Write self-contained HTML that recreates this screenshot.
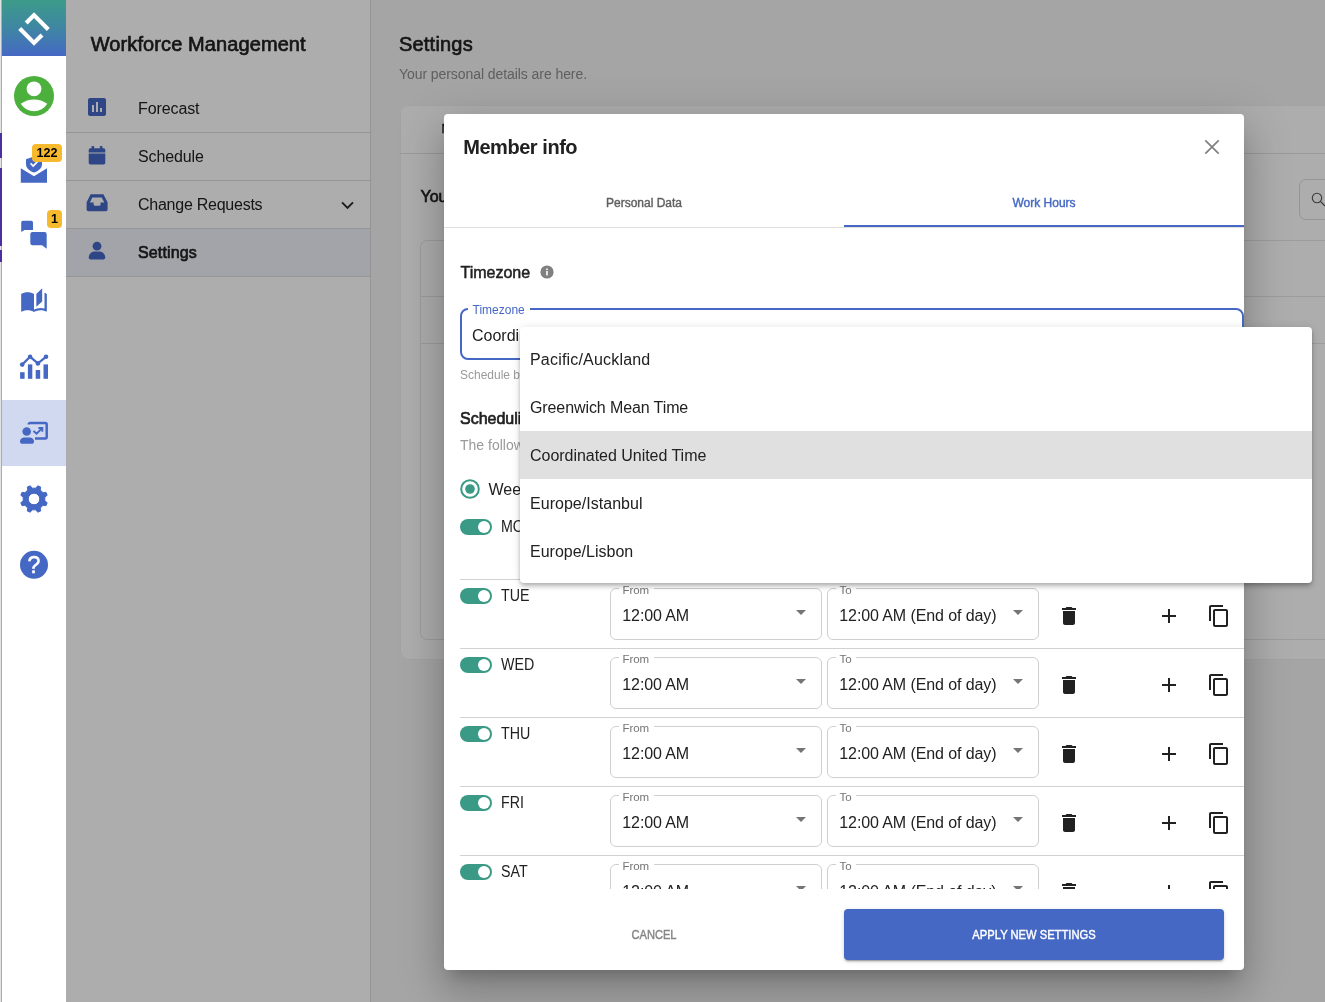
<!DOCTYPE html>
<html lang="en">
<head>
<meta charset="utf-8">
<title>Workforce Management - Settings</title>
<style>
*{box-sizing:border-box;margin:0;padding:0}
html,body{width:1325px;height:1002px;overflow:hidden;background:#fff}
body{font-family:"Liberation Sans",Arial,sans-serif;color:#212121;position:relative;font-size:16px}
.abs{position:absolute}
.t{position:absolute;white-space:nowrap;line-height:1}
.med{-webkit-text-stroke:0.4px currentColor}
.med2{-webkit-text-stroke:0.65px currentColor}
svg{display:block;position:absolute;overflow:visible}

/* left sliver of host page */
#strip{position:absolute;left:0;top:0;width:2px;height:1002px;background:linear-gradient(90deg,#e2e2e2 0,#e2e2e2 1px,#adadad 1px)}
#strip i{position:absolute;left:0;width:2px;background:#4b2f9e}

/* icon rail */
#rail{position:absolute;left:2px;top:0;width:64px;height:1002px;background:#fff}
#logo{position:absolute;left:0;top:0;width:64px;height:56px;background:linear-gradient(180deg,#3c9b89 0%,#3f86a3 50%,#4568c4 100%)}
#rail .sel{position:absolute;left:0;top:400px;width:64px;height:66px;background:#d1d9f1}
.badge{position:absolute;height:18px;border-radius:4px;background:#f7b92e;color:#000;font-weight:700;font-size:12.600px;line-height:19px;text-align:center}

/* app (micro-frontend) area */
#app{position:absolute;left:66px;top:0;width:1259px;height:1002px;overflow:hidden;background:#f3f3f3}
#nav{position:absolute;left:0;top:0;width:305px;height:1002px;background:#fff;border-right:1px solid #dcdcdc}
.nitem{position:absolute;left:0;width:304px;height:48px;border-bottom:1px solid #dedede}
#scrim{position:absolute;left:0;top:0;width:1259px;height:1002px;background:rgba(0,0,0,.32)}

/* background card */
#card{position:absolute;left:334px;top:105px;width:1000px;height:555px;background:#fff;border-radius:9px;box-shadow:inset 0 0 0 1px #f0f0f0}

/* dialog */
#dlg{position:absolute;left:378px;top:114px;width:800px;height:856px;background:#fff;border-radius:4px;
 box-shadow:0 11px 15px -7px rgba(0,0,0,.2),0 24px 38px 3px rgba(0,0,0,.14),0 9px 46px 8px rgba(0,0,0,.12)}
#scroll{position:absolute;left:0;top:114px;width:800px;height:661px;overflow:hidden}
.row{position:absolute;left:16px;width:784px;height:69px}
.row:before{content:"";position:absolute;left:0;top:0;width:784px;height:1px;background:#d2d2d2}
.row.first:before{display:none}
.tog{position:absolute;left:0;top:9px;width:32px;height:16px;border-radius:8px;background:#3b9a85}
.tog:after{content:"";position:absolute;right:2px;top:2px;width:12px;height:12px;border-radius:50%;background:#fff}
.day{position:absolute;left:40.500px;top:8.500px;font-size:16px;line-height:16px;white-space:nowrap;transform:scaleX(.89);transform-origin:0 0}
.fld{position:absolute;top:9px;height:52px;width:212px;border:1px solid #cfcfcf;border-radius:6px}
.fld .lb{position:absolute;top:-6px;left:8px;padding:0 5px 0 3.500px;background:#fff;font-size:11.500px;line-height:14px;color:#757575;white-space:nowrap;letter-spacing:-.1px}
.fld .v{position:absolute;left:11.300px;top:18px;font-size:16px;line-height:18px;white-space:nowrap;color:#212121;letter-spacing:-.1px}
.fld .ar{position:absolute;right:15px;top:21px;width:0;height:0;border-left:5px solid transparent;border-right:5px solid transparent;border-top:5px solid #757575}
.ic{position:absolute;top:25px;width:24px;height:24px}

/* dropdown */
#menu{position:absolute;left:454px;top:327px;width:792px;height:256px;background:#fff;border-radius:4px;
 box-shadow:0 2px 4px -1px rgba(0,0,0,.2),0 4px 5px 0 rgba(0,0,0,.14),0 1px 10px 0 rgba(0,0,0,.12)}
.mi{position:absolute;left:0;width:792px;height:48px;padding-left:10px;font-size:16px;line-height:48px;white-space:nowrap;color:#212121}
#rail,#nav,#main,#dlg,#menu,#scroll{will-change:transform}
.mi span{display:inline-block;transform:translateY(.5px)}
</style>
</head>
<body>

<div id="strip">
 <i style="top:133px;height:25px"></i><i style="top:168px;height:78px"></i><i style="top:250px;height:12px"></i>
</div>

<div id="rail">
 <div id="logo"></div>
 <div class="sel"></div>
 
 <svg style="left:-2px;top:0" width="68" height="600" viewBox="0 0 68 600">
  <!-- logo -->
  <g fill="none" stroke="#fff" stroke-width="4.200" stroke-linejoin="miter">
   <polyline points="26.200,22.900 34,15.100 48.300,29.400"/>
   <polyline points="19.700,28.600 34,42.900 42,34.900"/>
  </g>
  <!-- avatar (account_circle 48px) -->
  <circle cx="34" cy="96" r="20" fill="#4cb03c"/>
  <circle cx="34" cy="88.800" r="7.400" fill="#fff"/>
  <path d="M20.750,103.800 A22.400,22.400 0 0 1 47.250,103.800 A15.600,15.600 0 0 1 20.750,103.800Z" fill="#fff"/>
  <!-- inbox / shield -->
  <g fill="#4568c4">
   <path d="M20.8,168.2 L34,176.2 L47,168.2 V182.8 H20.8Z"/>
   <path d="M26,159.2 L34,156.5 L42,159.2 V164 C42,168.2 38.4,171 34,172.6 C29.600,171 26,168.2 26,164Z"/>
  </g>
  <polyline points="30.6,163.4 33.2,166 38.2,160.8" fill="none" stroke="#fff" stroke-width="1.7"/>
  <!-- chat -->
  <g fill="#4568c4">
   <path d="M23,220.800 H31.200 A1.800,1.800 0 0 1 33,222.600 V230 H24.500 L21.200,232 V222.600 A1.800,1.800 0 0 1 23,220.800Z"/>
   <path d="M32.500,232 H44.500 A2.200,2.200 0 0 1 46.700,234.200 V248.700 L42,245.200 H32.500 A2.200,2.200 0 0 1 30.300,243 V234.200 A2.200,2.200 0 0 1 32.500,232Z"/>
  </g>
  <!-- book (auto_stories 28px) -->
  <g transform="translate(20,287) scale(1.1667)" fill="#4568c4"><path d="M19 1l-5 5v11l5-4.500V1zM1 6v14.650c0 .250.250.500.500.500.100 0 .150-.050.250-.050C3.100 20.450 5.050 20 6.500 20c1.950 0 4.050.400 5.500 1.500V6c-1.450-1.100-3.550-1.500-5.500-1.500S2.450 4.900 1 6zm22 13.500V6c-.600-.450-1.250-.750-2-1v13.500c-1.100-.350-2.300-.500-3.500-.500-1.700 0-4.150.650-5.500 1.500v2c1.350-.850 3.800-1.500 5.500-1.500 1.650 0 3.350.300 4.750 1.050.100.050.150.050.250.050.250 0 .500-.250.500-.500v-1.100z"/></g>
  <!-- analytics -->
  <g fill="#4568c4">
   <rect x="20.100" y="372.200" width="4.500" height="6.600"/>
   <rect x="27.900" y="364.400" width="4.400" height="14.400"/>
   <rect x="35.700" y="370" width="4.500" height="8.800"/>
   <rect x="43.500" y="364.400" width="4.500" height="14.400"/>
   <circle cx="22.200" cy="364.600" r="2.300"/><circle cx="30.100" cy="356.800" r="2.300"/><circle cx="37.900" cy="363.400" r="2.300"/><circle cx="46" cy="356.800" r="2.300"/>
  </g>
  <polyline points="22.200,364.600 30.100,356.800 37.900,363.400 46,356.800" fill="none" stroke="#4568c4" stroke-width="2.200"/>
  <!-- wfm -->
  <g fill="#4568c4">
   <circle cx="26.700" cy="431.500" r="4.300"/>
   <path d="M20,441.400 C20,438.800 22.400,437.400 24.800,437.400 H29.200 C31.600,437.400 34,438.800 34,441.400 C34,442.900 33,443.800 31.800,443.800 H22.200 C21,443.800 20,442.900 20,441.400Z"/>
  </g>
  <g fill="none" stroke="#4568c4">
   <path d="M28.700,424.600 V424.400 A1.400,1.400 0 0 1 30.100,423 H45.300 A1.400,1.400 0 0 1 46.700,424.400 V437.100 A1.400,1.400 0 0 1 45.300,438.500 H35" stroke-width="2.500"/>
   <polyline points="33.400,431 36.600,433.600 41.600,428.600" stroke-width="1.900"/>
   <polyline points="38.400,428 42.300,428 42.300,431.800" stroke-width="1.900"/>
  </g>
  <!-- gear -->
  <g transform="translate(20,485)"><path fill="#4568c4" stroke="#4568c4" stroke-width="1" stroke-linejoin="round" fill-rule="evenodd" d="M15.98,3.18 L17.72,0.81 L20.69,2.05 L20.25,4.95 L23.05,7.75 L25.95,7.31 L27.19,10.28 L24.82,12.02 L24.82,15.98 L27.19,17.72 L25.95,20.69 L23.05,20.25 L20.25,23.05 L20.69,25.95 L17.72,27.19 L15.98,24.82 L12.02,24.82 L10.28,27.19 L7.31,25.95 L7.75,23.05 L4.95,20.25 L2.05,20.69 L0.81,17.72 L3.18,15.98 L3.18,12.02 L0.81,10.28 L2.05,7.31 L4.95,7.75 L7.75,4.95 L7.31,2.05 L10.28,0.81 L12.02,3.18Z M14,8.200 A5.800,5.800 0 1 0 14,19.800 A5.800,5.800 0 1 0 14,8.200Z"/></g>
  <!-- help -->
  <circle cx="34" cy="564.800" r="14" fill="#4568c4"/>
  <text x="34" y="573" text-anchor="middle" font-family="Liberation Sans, Arial, sans-serif" font-size="23" fill="#fff" stroke="#fff" stroke-width=".500">?</text>
 </svg>
 <div class="badge" style="left:30px;top:144px;width:30px">122</div>
 <div class="badge" style="left:45px;top:210px;width:15px">1</div>

</div>

<div id="app">
 <div id="nav">
  
  <div class="t med2" style="left:24.700px;top:34px;font-size:20px;letter-spacing:.1px" id="t1">Workforce Management</div>
  <div class="nitem" style="top:85px"></div>
  <div class="nitem" style="top:133px"></div>
  <div class="nitem" style="top:181px"></div>
  <div class="nitem" style="top:229px;background:#eff2fa"></div>
  <div class="t" style="left:72px;top:101px;letter-spacing:-.1px" id="t2">Forecast</div>
  <div class="t" style="left:72px;top:149px;letter-spacing:-.12px" id="t3">Schedule</div>
  <div class="t" style="left:72px;top:197px;letter-spacing:-.25px" id="t4">Change Requests</div>
  <div class="t med2" style="left:72px;top:245px;letter-spacing:.15px" id="t5">Settings</div>
  <svg style="left:0;top:0" width="304" height="300" viewBox="66 0 304 300">
   <g fill="#4568c4">
    <g transform="translate(85,95)"><path d="M19 3H5c-1.100 0-2 .900-2 2v14c0 1.100.900 2 2 2h14c1.100 0 2-.900 2-2V5c0-1.100-.900-2-2-2zM9 17H7v-7h2v7zm4 0h-2V7h2v10zm4 0h-2v-4h2v4z"/></g>
    <rect x="91.600" y="145.900" width="2.500" height="4" rx=".700"/><rect x="99.900" y="145.900" width="2.500" height="4" rx=".700"/>
    <path d="M88.700,150 a1.700,1.700 0 0 1 1.700,-1.700 h13.200 a1.700,1.700 0 0 1 1.700,1.700 v2.400 h-16.600z"/>
    <path d="M88.700,153.600 h16.600 v9.100 a1.700,1.700 0 0 1 -1.700,1.700 h-13.200 a1.700,1.700 0 0 1 -1.700,-1.700z"/>
    <path fill-rule="evenodd" d="M90.600,194.300 H103.400 L107.600,202.300 V209.400 a1.800,1.800 0 0 1 -1.800,1.800 H88.400 a1.800,1.800 0 0 1 -1.800,-1.800 V202.300Z M92.300,197.600 H101.700 L104.300,202.600 H100.600 V204.200 a1.600,1.600 0 0 1 -1.600,1.600 H95.200 a1.600,1.600 0 0 1 -1.600,-1.600 V202.600 H89.900Z"/>
    <circle cx="97" cy="246.200" r="4.400"/>
    <path d="M88.700,257.600 c0,-3.600 2.800,-6.200 6,-6.200 h4.600 c3.200,0 6,2.600 6,6.200 c0,1 -.800,1.800 -1.800,1.800 h-13 c-1,0 -1.800,-.800 -1.800,-1.800z"/>
   </g>
   <polyline points="342,202.300 347.500,207.800 353,202.300" fill="none" stroke="#2a2a2a" stroke-width="1.900"/>
  </svg>

 </div>
 <div id="main">
  
  <div class="t med2" style="left:333px;top:34px;font-size:20px;letter-spacing:.2px" id="t6">Settings</div>
  <div class="t" style="left:333px;top:67px;font-size:14px;color:#8d8d8d;letter-spacing:-.07px" id="t7">Your personal details are here.</div>
  <div id="card">
   <div class="abs" style="left:0;top:48px;width:1000px;height:1px;background:#e2e2e2"></div>
   <div class="t med" style="left:41.500px;top:17.500px;font-size:12px">Members</div>
   <div class="t med2" style="left:20.500px;top:84px;font-size:16px">Your team members</div>
   <div class="abs" style="left:20px;top:135px;width:1000px;height:400px;border:1px solid #e6e6e6;border-radius:7px"></div>
   <div class="abs" style="left:20px;top:191px;width:1000px;height:1px;background:#e6e6e6"></div>
   <div class="abs" style="left:20px;top:238px;width:1000px;height:1px;background:#e6e6e6"></div>
   <div class="abs" style="left:899px;top:74px;width:120px;height:41px;border:1px solid #dcdcdc;border-radius:7px"></div>
   <svg style="left:911px;top:87px" width="16" height="16" viewBox="0 0 16 16"><circle cx="6" cy="6" r="4.700" fill="none" stroke="#555" stroke-width="1.100"/><path d="M9.500,9.500 L14,14" stroke="#555" stroke-width="1.100"/></svg>
  </div>

 </div>
 <div id="scrim"></div>
 <div id="dlg">
  
  <div class="t" style="left:19.200px;top:23px;font-size:20px;font-weight:700;letter-spacing:-.45px" id="t8">Member info</div>
  <svg style="left:761px;top:26px" width="14" height="14" viewBox="0 0 14 14"><path d="M0.300,0.300 L13.700,13.700 M13.700,0.300 L0.300,13.700" stroke="#808080" stroke-width="1.700" fill="none"/></svg>
  <div class="t med" style="left:100px;width:200px;text-align:center;top:83px;font-size:12px;color:#5f5f5f" id="t9"><span>Personal Data</span></div>
  <div class="t med" style="left:500px;width:200px;text-align:center;top:83px;font-size:12px;color:#4568c4" id="t10"><span>Work Hours</span></div>
  <div class="abs" style="left:0;top:113px;width:800px;height:1px;background:#e0e0e0"></div>
  <div class="abs" style="left:400px;top:111px;width:400px;height:2px;background:#4568c4"></div>
  <div id="scroll">
   <div class="t med" style="left:16.500px;top:37px;font-size:16px;-webkit-text-stroke-width:.5px" id="t11">Timezone</div>
   <svg style="left:95.700px;top:37.100px" width="14" height="14" viewBox="0 0 14 14"><circle cx="7" cy="7" r="6.600" fill="#808080"/><rect x="6.200" y="6" width="1.600" height="4.400" fill="#fff"/><rect x="6.200" y="3.500" width="1.600" height="1.600" fill="#fff"/></svg>
   <div class="abs" style="left:16px;top:80px;width:784px;height:52px;border:2px solid #4568c4;border-radius:8px"></div>
   <div class="abs" style="left:23.500px;top:78px;width:62.500px;height:6px;background:#fff"></div>
   <div class="t" style="left:28.500px;top:76px;font-size:12px;color:#4568c4" id="t12">Timezone</div>
   <div class="t" style="left:28px;top:100.200px;font-size:16px">Coordinated United Time</div>
   <div class="t" style="left:16px;top:140.500px;font-size:12px;color:#9a9a9a">Schedule based on the selected timezone</div>
   <div class="t med2" style="left:16px;top:183px;font-size:16px">Scheduling availability</div>
   <div class="t" style="left:16px;top:210px;font-size:14px;color:#9a9a9a">The following hours are used for scheduling</div>
   <svg style="left:16px;top:251px" width="20" height="20" viewBox="0 0 20 20"><circle cx="10" cy="10" r="8.800" fill="none" stroke="#3b9a85" stroke-width="2"/><circle cx="10" cy="10" r="4.800" fill="#3b9a85"/></svg>
   <div class="t" style="left:44.500px;top:254.200px;font-size:16px">Weekly</div>
   
   <div class="row first" style="top:282px">
    <div class="tog"></div><div class="day">MON</div>
    <div class="fld" style="left:150px"><span class="lb">From</span><span class="v">12:00 AM</span><i class="ar"></i></div>
    <div class="fld" style="left:367px"><span class="lb">To</span><span class="v">12:00 AM (End of day)</span><i class="ar"></i></div>
    <svg class="ic" style="left:597px" viewBox="0 0 24 24"><path fill="#212121" d="M6 19c0 1.100.900 2 2 2h8c1.100 0 2-.900 2-2V7H6v12zM19 4h-3.500l-1-1h-5l-1 1H5v2h14V4z"/></svg>
    <svg class="ic" style="left:697px" viewBox="0 0 24 24"><path fill="#212121" d="M19 13h-6v6h-2v-6H5v-2h6V5h2v6h6v2z"/></svg>
    <svg class="ic" style="left:747px" viewBox="0 0 24 24"><path fill="#212121" d="M16 1H4c-1.100 0-2 .900-2 2v14h2V3h12V1zm3 4H8c-1.100 0-2 .900-2 2v14c0 1.100.900 2 2 2h11c1.100 0 2-.900 2-2V7c0-1.100-.900-2-2-2zm0 16H8V7h11v14z"/></svg>
   </div>
   <div class="row" style="top:351px">
    <div class="tog"></div><div class="day">TUE</div>
    <div class="fld" style="left:150px"><span class="lb">From</span><span class="v">12:00 AM</span><i class="ar"></i></div>
    <div class="fld" style="left:367px"><span class="lb">To</span><span class="v">12:00 AM (End of day)</span><i class="ar"></i></div>
    <svg class="ic" style="left:597px" viewBox="0 0 24 24"><path fill="#212121" d="M6 19c0 1.100.900 2 2 2h8c1.100 0 2-.900 2-2V7H6v12zM19 4h-3.500l-1-1h-5l-1 1H5v2h14V4z"/></svg>
    <svg class="ic" style="left:697px" viewBox="0 0 24 24"><path fill="#212121" d="M19 13h-6v6h-2v-6H5v-2h6V5h2v6h6v2z"/></svg>
    <svg class="ic" style="left:747px" viewBox="0 0 24 24"><path fill="#212121" d="M16 1H4c-1.100 0-2 .900-2 2v14h2V3h12V1zm3 4H8c-1.100 0-2 .900-2 2v14c0 1.100.900 2 2 2h11c1.100 0 2-.900 2-2V7c0-1.100-.900-2-2-2zm0 16H8V7h11v14z"/></svg>
   </div>
   <div class="row" style="top:420px">
    <div class="tog"></div><div class="day">WED</div>
    <div class="fld" style="left:150px"><span class="lb">From</span><span class="v">12:00 AM</span><i class="ar"></i></div>
    <div class="fld" style="left:367px"><span class="lb">To</span><span class="v">12:00 AM (End of day)</span><i class="ar"></i></div>
    <svg class="ic" style="left:597px" viewBox="0 0 24 24"><path fill="#212121" d="M6 19c0 1.100.900 2 2 2h8c1.100 0 2-.900 2-2V7H6v12zM19 4h-3.500l-1-1h-5l-1 1H5v2h14V4z"/></svg>
    <svg class="ic" style="left:697px" viewBox="0 0 24 24"><path fill="#212121" d="M19 13h-6v6h-2v-6H5v-2h6V5h2v6h6v2z"/></svg>
    <svg class="ic" style="left:747px" viewBox="0 0 24 24"><path fill="#212121" d="M16 1H4c-1.100 0-2 .900-2 2v14h2V3h12V1zm3 4H8c-1.100 0-2 .900-2 2v14c0 1.100.900 2 2 2h11c1.100 0 2-.900 2-2V7c0-1.100-.900-2-2-2zm0 16H8V7h11v14z"/></svg>
   </div>
   <div class="row" style="top:489px">
    <div class="tog"></div><div class="day">THU</div>
    <div class="fld" style="left:150px"><span class="lb">From</span><span class="v">12:00 AM</span><i class="ar"></i></div>
    <div class="fld" style="left:367px"><span class="lb">To</span><span class="v">12:00 AM (End of day)</span><i class="ar"></i></div>
    <svg class="ic" style="left:597px" viewBox="0 0 24 24"><path fill="#212121" d="M6 19c0 1.100.900 2 2 2h8c1.100 0 2-.900 2-2V7H6v12zM19 4h-3.500l-1-1h-5l-1 1H5v2h14V4z"/></svg>
    <svg class="ic" style="left:697px" viewBox="0 0 24 24"><path fill="#212121" d="M19 13h-6v6h-2v-6H5v-2h6V5h2v6h6v2z"/></svg>
    <svg class="ic" style="left:747px" viewBox="0 0 24 24"><path fill="#212121" d="M16 1H4c-1.100 0-2 .900-2 2v14h2V3h12V1zm3 4H8c-1.100 0-2 .900-2 2v14c0 1.100.900 2 2 2h11c1.100 0 2-.900 2-2V7c0-1.100-.900-2-2-2zm0 16H8V7h11v14z"/></svg>
   </div>
   <div class="row" style="top:558px">
    <div class="tog"></div><div class="day">FRI</div>
    <div class="fld" style="left:150px"><span class="lb">From</span><span class="v">12:00 AM</span><i class="ar"></i></div>
    <div class="fld" style="left:367px"><span class="lb">To</span><span class="v">12:00 AM (End of day)</span><i class="ar"></i></div>
    <svg class="ic" style="left:597px" viewBox="0 0 24 24"><path fill="#212121" d="M6 19c0 1.100.900 2 2 2h8c1.100 0 2-.900 2-2V7H6v12zM19 4h-3.500l-1-1h-5l-1 1H5v2h14V4z"/></svg>
    <svg class="ic" style="left:697px" viewBox="0 0 24 24"><path fill="#212121" d="M19 13h-6v6h-2v-6H5v-2h6V5h2v6h6v2z"/></svg>
    <svg class="ic" style="left:747px" viewBox="0 0 24 24"><path fill="#212121" d="M16 1H4c-1.100 0-2 .900-2 2v14h2V3h12V1zm3 4H8c-1.100 0-2 .900-2 2v14c0 1.100.900 2 2 2h11c1.100 0 2-.900 2-2V7c0-1.100-.900-2-2-2zm0 16H8V7h11v14z"/></svg>
   </div>
   <div class="row" style="top:627px">
    <div class="tog"></div><div class="day">SAT</div>
    <div class="fld" style="left:150px"><span class="lb">From</span><span class="v">12:00 AM</span><i class="ar"></i></div>
    <div class="fld" style="left:367px"><span class="lb">To</span><span class="v">12:00 AM (End of day)</span><i class="ar"></i></div>
    <svg class="ic" style="left:597px" viewBox="0 0 24 24"><path fill="#212121" d="M6 19c0 1.100.900 2 2 2h8c1.100 0 2-.900 2-2V7H6v12zM19 4h-3.500l-1-1h-5l-1 1H5v2h14V4z"/></svg>
    <svg class="ic" style="left:697px" viewBox="0 0 24 24"><path fill="#212121" d="M19 13h-6v6h-2v-6H5v-2h6V5h2v6h6v2z"/></svg>
    <svg class="ic" style="left:747px" viewBox="0 0 24 24"><path fill="#212121" d="M16 1H4c-1.100 0-2 .900-2 2v14h2V3h12V1zm3 4H8c-1.100 0-2 .900-2 2v14c0 1.100.900 2 2 2h11c1.100 0 2-.900 2-2V7c0-1.100-.900-2-2-2zm0 16H8V7h11v14z"/></svg>
   </div>
   <div class="row" style="top:696px">
    <div class="tog"></div><div class="day">SUN</div>
    <div class="fld" style="left:150px"><span class="lb">From</span><span class="v">12:00 AM</span><i class="ar"></i></div>
    <div class="fld" style="left:367px"><span class="lb">To</span><span class="v">12:00 AM (End of day)</span><i class="ar"></i></div>
    <svg class="ic" style="left:597px" viewBox="0 0 24 24"><path fill="#212121" d="M6 19c0 1.100.900 2 2 2h8c1.100 0 2-.900 2-2V7H6v12zM19 4h-3.500l-1-1h-5l-1 1H5v2h14V4z"/></svg>
    <svg class="ic" style="left:697px" viewBox="0 0 24 24"><path fill="#212121" d="M19 13h-6v6h-2v-6H5v-2h6V5h2v6h6v2z"/></svg>
    <svg class="ic" style="left:747px" viewBox="0 0 24 24"><path fill="#212121" d="M16 1H4c-1.100 0-2 .900-2 2v14h2V3h12V1zm3 4H8c-1.100 0-2 .900-2 2v14c0 1.100.900 2 2 2h11c1.100 0 2-.900 2-2V7c0-1.100-.900-2-2-2zm0 16H8V7h11v14z"/></svg>
   </div>
  </div>
  <div class="t med" style="left:110px;width:200px;text-align:center;top:815px;font-size:12px;color:#858585;transform:scaleX(.926)" id="t23"><span>CANCEL</span></div>
  <div class="abs" style="left:400px;top:795px;width:380px;height:51px;border-radius:4px;background:#4568c4;box-shadow:0 3px 1px -2px rgba(0,0,0,.2),0 2px 2px 0 rgba(0,0,0,.14),0 1px 5px 0 rgba(0,0,0,.12)"></div>
  <div class="t med" style="left:490px;width:200px;text-align:center;top:815px;font-size:12px;color:#fff;transform:scaleX(.932)" id="t24"><span>APPLY NEW SETTINGS</span></div>

 </div>
 <div id="menu">
  
  <div class="mi" style="top:8px"><span id="t13" style="letter-spacing:.19px">Pacific/Auckland</span></div>
  <div class="mi" style="top:56px"><span id="t14" style="letter-spacing:-.1px">Greenwich Mean Time</span></div>
  <div class="mi" style="top:104px;background:#e0e0e0"><span id="t15" style="letter-spacing:-.03px">Coordinated United Time</span></div>
  <div class="mi" style="top:152px"><span id="t16" style="letter-spacing:.03px">Europe/Istanbul</span></div>
  <div class="mi" style="top:200px"><span id="t17">Europe/Lisbon</span></div>

 </div>
</div>

</body>
</html>
